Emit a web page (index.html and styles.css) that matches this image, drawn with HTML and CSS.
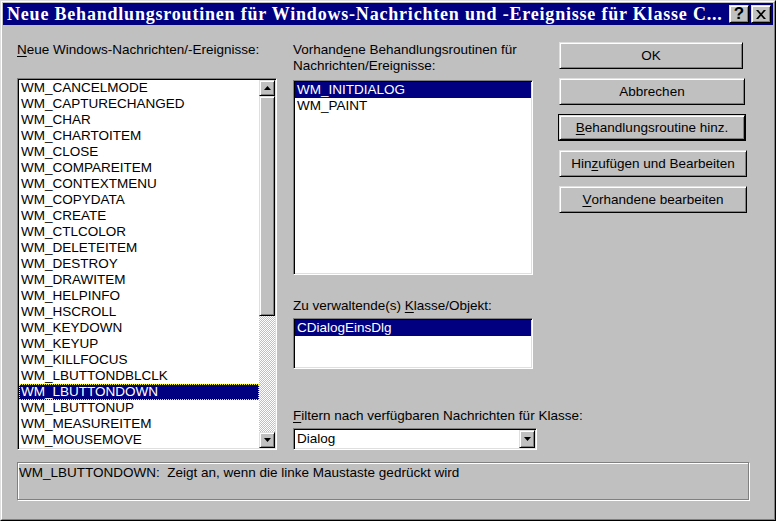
FILE: index.html
```html
<!DOCTYPE html>
<html lang="de">
<head>
<meta charset="utf-8">
<title>Neue Behandlungsroutinen</title>
<link rel="stylesheet" href="styles.css">
</head>
<body>
<div class="window">
  <div class="frame">
    <div class="titlebar">
      <span class="title">Neue Behandlungsroutinen für Windows-Nachrichten und -Ereignisse für Klasse C...</span>
      <div class="tbuttons">
        <span class="tbtn raised help">?</span>
        <span class="tbtn raised close"><svg width="10" height="9" viewBox="0 0 10 9"><path d="M0 0h2.2l2.8 3.3 2.8-3.3h2.2l-3.9 4.5 3.9 4.5h-2.2l-2.8-3.3-2.8 3.3h-2.2l3.9-4.5z" fill="#000"/></svg></span>
      </div>
    </div>
    <div class="content">
      <div class="columns">
        <div class="col-left">
          <div class="label"><u>N</u>eue Windows-Nachrichten/-Ereignisse:</div>
          <div class="listbox sunken big">
            <div class="items">
              <div class="item">WM_CANCELMODE</div>
              <div class="item">WM_CAPTURECHANGED</div>
              <div class="item">WM_CHAR</div>
              <div class="item">WM_CHARTOITEM</div>
              <div class="item">WM_CLOSE</div>
              <div class="item">WM_COMPAREITEM</div>
              <div class="item">WM_CONTEXTMENU</div>
              <div class="item">WM_COPYDATA</div>
              <div class="item">WM_CREATE</div>
              <div class="item">WM_CTLCOLOR</div>
              <div class="item">WM_DELETEITEM</div>
              <div class="item">WM_DESTROY</div>
              <div class="item">WM_DRAWITEM</div>
              <div class="item">WM_HELPINFO</div>
              <div class="item">WM_HSCROLL</div>
              <div class="item">WM_KEYDOWN</div>
              <div class="item">WM_KEYUP</div>
              <div class="item">WM_KILLFOCUS</div>
              <div class="item">WM_LBUTTONDBLCLK</div>
              <div class="item sel focus">WM_LBUTTONDOWN</div>
              <div class="item">WM_LBUTTONUP</div>
              <div class="item">WM_MEASUREITEM</div>
              <div class="item">WM_MOUSEMOVE</div>
            </div>
            <div class="scrollbar">
              <div class="arrow raised"><svg width="7" height="4" viewBox="0 0 7 4"><path d="M3.5 0L7 4H0z" fill="#000"/></svg></div>
              <div class="thumb raised"></div>
              <div class="track"></div>
              <div class="arrow raised"><svg width="7" height="4" viewBox="0 0 7 4"><path d="M0 0h7L3.5 4z" fill="#000"/></svg></div>
            </div>
          </div>
        </div>
        <div class="col-mid">
          <div class="label">Vorhand<u>e</u>ne Behandlungsroutinen für<br>Nachrichten/Ereignisse:</div>
          <div class="listbox sunken handlers">
            <div class="items">
              <div class="item sel">WM_INITDIALOG</div>
              <div class="item">WM_PAINT</div>
            </div>
          </div>
          <div class="label gap-class">Zu verwaltende(s) <u>K</u>lasse/Objekt:</div>
          <div class="listbox sunken classes">
            <div class="items">
              <div class="item sel">CDialogEinsDlg</div>
            </div>
          </div>
          <div class="label gap-filter"><u>F</u>iltern nach verfügbaren Nachrichten für Klasse:</div>
          <div class="combo sunken">
            <span class="combo-text">Dialog</span>
            <span class="combo-btn raised"><svg width="7" height="4" viewBox="0 0 7 4"><path d="M0 0h7L3.5 4z" fill="#000"/></svg></span>
          </div>
        </div>
        <div class="col-right">
          <div class="btn raised w1">OK</div>
          <div class="btn raised w2">Abbrechen</div>
          <div class="btn-default w3"><div class="btn raised"><u>B</u>ehandlungsroutine hinz.</div></div>
          <div class="btn raised w4">Hin<u>z</u>ufügen und Bearbeiten</div>
          <div class="btn raised w4"><u>V</u>orhandene bearbeiten</div>
        </div>
      </div>
      <div class="status">WM_LBUTTONDOWN:&nbsp; Zeigt an, wenn die linke Maustaste gedrückt wird</div>
    </div>
  </div>
</div>
</body>
</html>
```
FILE: styles.css
```css
html, body {
  margin: 0;
  padding: 0;
  background: #c0c0c0;
}
body {
  width: 776px;
  height: 521px;
  overflow: hidden;
  font-family: "Liberation Sans", Arial, sans-serif;
  font-size: 13.5px;
  color: #000;
}
u { text-decoration: underline; text-underline-offset: 2px; }

.window {
  width: 776px;
  height: 521px;
  box-sizing: border-box;
  border: 1px solid;
  border-color: #dfdfdf #000 #000 #dfdfdf;
  background: #c0c0c0;
}
.frame {
  height: 100%;
  box-sizing: border-box;
  border: 1px solid;
  border-color: #fff #808080 #808080 #fff;
  padding: 1px;
  display: flex;
  flex-direction: column;
}

.titlebar {
  height: 22px;
  background: #000080;
  display: flex;
  align-items: center;
  justify-content: space-between;
  padding: 0 2px 0 4px;
}
.title {
  font-family: "Liberation Serif", "Times New Roman", serif;
  font-weight: bold;
  font-size: 18px;
  letter-spacing: 0.8px;
  color: #fff;
  white-space: nowrap;
  line-height: 22px;
}
.tbuttons { display: flex; gap: 2px; }
.tbtn {
  width: 20px;
  height: 18px;
  display: flex;
  align-items: center;
  justify-content: center;
  font-weight: bold;
  font-size: 17px;
  line-height: 16px;
}
.tbtn.help { font-family: "Liberation Sans", Arial, sans-serif; }

.raised {
  box-sizing: border-box;
  background: #c0c0c0;
  border: 1px solid;
  border-color: #dfdfdf #000 #000 #dfdfdf;
  box-shadow: inset 1px 1px #fff, inset -1px -1px #808080;
}
.sunken {
  box-sizing: border-box;
  border: 1px solid;
  border-color: #808080 #fff #fff #808080;
  box-shadow: inset 1px 1px #000, inset -1px -1px #dfdfdf;
  padding: 1px;
  background: #fff;
}

.content {
  flex: 1;
  padding: 17px 0 0 14px;
  display: flex;
  flex-direction: column;
}
.columns { display: flex; }

.label {
  line-height: 16px;
  white-space: nowrap;
}

.col-left { width: 260px; }
.col-left .label { margin-bottom: 20px; }

.listbox { display: flex; overflow: hidden; }
.listbox.big { width: 260px; height: 372px; }
.items { flex: 1; overflow: hidden; }
.item {
  height: 16px;
  line-height: 16px;
  padding-left: 2px;
  white-space: nowrap;
}
.item.sel { background: #000080; color: #fff; }
.item.focus { outline: 1px dotted #ffff00; outline-offset: -1px; }

.scrollbar {
  width: 16px;
  display: flex;
  flex-direction: column;
}
.arrow {
  height: 16px;
  display: flex;
  align-items: center;
  justify-content: center;
}
.thumb { height: 220px; }
.track {
  flex: 1;
  background-color: #c0c0c0;
  background-image: repeating-conic-gradient(#fff 0 25%, #c0c0c0 0 50%);
  background-size: 2px 2px;
}

.col-mid {
  width: 243px;
  margin-left: 16px;
  display: flex;
  flex-direction: column;
}
.col-mid .label:first-child { margin-bottom: 6px; }
.handlers { width: 240px; height: 195px; }
.gap-class { margin-top: 23px; margin-bottom: 4px; }
.classes { width: 240px; height: 51px; }
.gap-filter { margin-top: 39px; margin-bottom: 4px; }
.combo {
  width: 244px;
  height: 22px;
  display: flex;
  align-items: center;
  justify-content: space-between;
}
.combo-text { padding-left: 2px; line-height: 16px; }
.combo-btn {
  width: 16px;
  height: 18px;
  display: flex;
  align-items: center;
  justify-content: center;
}

.col-right {
  margin-left: 22px;
  display: flex;
  flex-direction: column;
  gap: 9px;
}
.btn {
  height: 27px;
  display: flex;
  align-items: center;
  justify-content: center;
  white-space: nowrap;
}
.w1 { width: 184px; margin-left: 1px; }
.w2 { width: 186px; margin-left: 1px; }
.w3 { width: 188px; }
.w4 { width: 188px; margin-left: 1px; }
.btn-default {
  box-sizing: border-box;
  height: 27px;
  border: 1px solid #000;
  display: flex;
}
.btn-default .btn { flex: 1; height: auto; }

.status {
  margin-top: 12px;
  width: 733px;
  height: 39px;
  box-sizing: border-box;
  border: 1px solid;
  border-color: #808080 #fff #fff #808080;
  box-shadow: inset -1px -1px #808080, inset 1px 1px #fff;
  padding: 2px 1px;
  line-height: 16px;
  white-space: nowrap;
}
```
